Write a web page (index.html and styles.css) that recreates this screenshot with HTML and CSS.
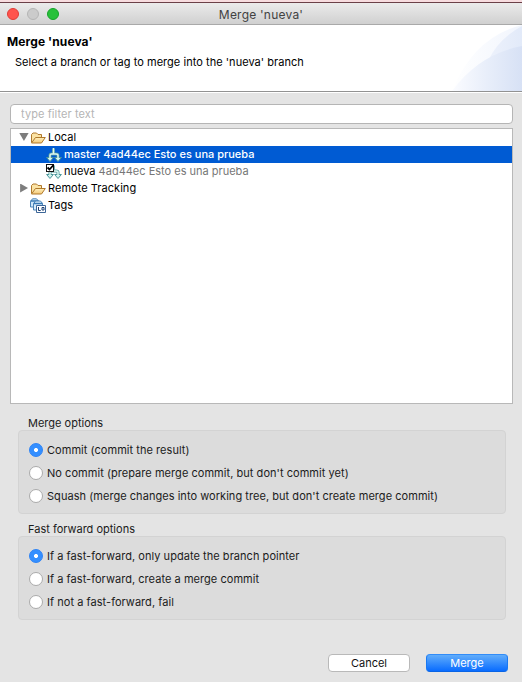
FILE: index.html
```html
<!DOCTYPE html>
<html lang="en">
<head>
<meta charset="utf-8">
<title>Merge 'nueva'</title>
<link rel="stylesheet" href="styles.css">
</head>
<body>
<svg width="0" height="0" class="defs" aria-hidden="true">
  <defs>
    <linearGradient id="fold" x1="0" y1="0" x2="0" y2="1"><stop offset="0" stop-color="#fff0bd"/><stop offset="1" stop-color="#f3c877"/></linearGradient>
    <linearGradient id="swoosh" x1="0" x2="1"><stop offset="0" stop-color="#fbfcff"/><stop offset=".5" stop-color="#e8eefa"/><stop offset="1" stop-color="#d7e1f5"/></linearGradient>
    <linearGradient id="swoosh2" x1="0" x2="1"><stop offset="0" stop-color="#ffffff"/><stop offset="1" stop-color="#f1f5fd"/></linearGradient>
    <linearGradient id="swoosh3" x1="0" x2="1"><stop offset="0" stop-color="#eff3fc"/><stop offset="1" stop-color="#e2eaf9"/></linearGradient>
    <symbol id="folder" viewBox="0 0 16 16">
      <path d="M1.500 12.500V4.500L3 3h3.500L8 4.500h3.500V8" fill="#fbe3a4" stroke="#b0792c"/>
      <path d="M1.500 13 5.500 7.500h9.800L11.500 13z" fill="url(#fold)" stroke="#b0792c"/>
    </symbol>
    <symbol id="branch" viewBox="0 0 16 16">
      <path d="M7.500 1.500v5.500M4 11.500V8.500q0-1.500 1.500-1.500h4.500q2 0 2 1.500v3" fill="none" stroke="#4f989c" stroke-width="3"/>
      <path d="M.6 10.500h6.800L4 14.500zM8.600 10.500h6.800L12 14.500z" fill="#c9f0ee" stroke="#4f989c"/>
      <path d="M7.500 1v6M4 12V8.500q0-1.500 1.500-1.500h4.500q2 0 2 1.500V12" fill="none" stroke="#dcf7f1" stroke-width="1.500"/>
    </symbol>
  </defs>
</svg>
<main class="window">
  <div class="titlebar">
    <i class="light red"></i><i class="light gray"></i><i class="light green"></i>
    <span class="title">Merge 'nueva'</span>
  </div>
  <header class="banner">
    <svg class="swoosh" width="70" height="66" viewBox="0 0 70 66">
      <path d="M0 66Q22 12 70 0V66z" fill="url(#swoosh2)"/>
      <path d="M36 36Q46 14 70 1V66H30z" fill="url(#swoosh3)"/>
      <path d="M0 66Q27 29 70 21V66z" fill="url(#swoosh)"/>
    </svg>
    <h1>Merge 'nueva'</h1>
    <p>Select a branch or tag to merge into the 'nueva' branch</p>
  </header>
  <section class="content">
    <input class="filter" type="text" placeholder="type filter text" aria-label="Filter">
    <div class="tree">
      <div class="row"><i class="arrow open"></i><svg class="icon"><use href="#folder"/></svg><span>Local</span></div>
      <div class="row child selected"><svg class="icon"><use href="#branch"/></svg><span>master 4ad44ec Esto es una prueba</span></div>
      <div class="row child"><svg class="icon" viewBox="0 0 16 16"><use href="#branch"/><path d="M0 0h8v8H0z" fill="#111"/><path d="M1 1h6v6H1z" fill="#fff"/><path d="m1.500 3.500 2 2L7.500 1" fill="none" stroke="#000" stroke-width="1.800"/></svg><span>nueva <em>4ad44ec Esto es una prueba</em></span></div>
      <div class="row"><i class="arrow closed"></i><svg class="icon"><use href="#folder"/></svg><span class="wide">Remote Tracking</span></div>
      <div class="row"><i class="arrow"></i><svg class="icon tags" viewBox="0 0 16 16">
        <path d="M.5 3.500 2.500.8h4L8.500 3V9h-8z" fill="#cfe7f8" stroke="#4a83b8"/>
        <path d="M.5 3h8" stroke="#397ab5" stroke-width="1.500"/>
        <path d="M3.500 6 5.500 3h5L12.500 5.500V12h-9z" fill="#d9edfa" stroke="#4a83b8"/>
        <path d="M3.500 5.500h9" stroke="#397ab5" stroke-width="1.500"/>
        <path d="M6.500 7.500h9v7h-9z" fill="#fff" stroke="#3d6698"/>
        <path d="M8.500 9v3.500h2.200M12 9.500h2v2.500h-2z" fill="none" stroke="#1c3f70"/></svg><span>Tags</span></div>
    </div>
    <h2 class="legend">Merge options</h2>
    <div class="group">
      <label><input type="radio" name="merge" checked><span>Commit (commit the result)</span></label>
      <label><input type="radio" name="merge"><span>No commit (prepare merge commit, but don't commit yet)</span></label>
      <label><input type="radio" name="merge"><span>Squash (merge changes into working tree, but don't create merge commit)</span></label>
    </div>
    <h2 class="legend">Fast forward options</h2>
    <div class="group">
      <label><input type="radio" name="ff" checked><span>If a fast-forward, only update the branch pointer</span></label>
      <label><input type="radio" name="ff"><span>If a fast-forward, create a merge commit</span></label>
      <label><input type="radio" name="ff"><span>If not a fast-forward, fail</span></label>
    </div>
  </section>
  <footer class="buttons"><button>Cancel</button><button class="primary">Merge</button></footer>
</main>
</body>
</html>
```
FILE: styles.css
```css
* { box-sizing: border-box; }
body { margin: 0; background: #e4e4e4; color: #1b1b1b; font: 11px/17px Inter, "Liberation Sans", sans-serif; }
.defs { position: absolute; }
.window { width: 522px; height: 682px; display: flex; flex-direction: column; overflow: hidden; background: #e4e4e4; border-top: 2px solid #f7dcdf; }
.titlebar { height: 23px; flex: none; display: flex; align-items: center; gap: 8px; padding: 0 7px; border-top: 1px solid #6b4048; border-bottom: 1px solid #a9a9a9; background: linear-gradient(#ebebeb, #d0d0d0); }
.light { width: 12px; height: 12px; border-radius: 50%; border: 1px solid; }
.red { background: #ff544d; border-color: #df3d37; }
.gray { background: #cbcbcb; border-color: #b5b5b5; }
.green { background: #28c13a; border-color: #16a329; }
.title { flex: 1; margin-right: 60px; padding-top: 1px; text-align: center; font-size: 12px; letter-spacing: .22px; color: #424242; }
.banner { height: 68px; flex: none; background: #fff; border-bottom: 1px solid #fff; box-shadow: inset 0 -1px #929292; position: relative; color: #000; padding: 8px 7px; }
.swoosh { position: absolute; right: 0; top: 0; }
h1 { margin: 0; font-size: 12px; line-height: 17px; font-weight: 700; letter-spacing: .1px; }
p { margin: 4px 0 0 8px; line-height: 17px; letter-spacing: .04px; }
.content { padding: 11px 9px 0 10px; display: flex; flex-direction: column; }
.filter { height: 20px; border: 1px solid #b5b5b5; border-radius: 4px; background: #fff; padding: 0 10px; font: inherit; letter-spacing: .08px; outline: 0; }
.filter::placeholder { color: #b5b5b5; opacity: 1; }
.tree { margin-top: 4px; height: 276px; border: 1px solid #b8b8b8; background: #fff; color: #000; }
.row { height: 17px; display: flex; align-items: center; padding-left: 8px; white-space: nowrap; }
.child { padding-left: 35px; }
.selected { background: #005bd3; color: #fff; font-weight: 500; }
.wide { letter-spacing: .04px; }
.icon { width: 16px; height: 16px; flex: none; margin-right: 2px; overflow: visible; }
.arrow { width: 11px; height: 10px; flex: none; }
.open { background: #7d7d7d; clip-path: polygon(0 0, 90% 0, 45% 85%); }
.closed { background: #7d7d7d; clip-path: polygon(10% 0, 82% 45%, 10% 90%); }
em { font-style: normal; color: #777; }
.legend { margin: 11px 0 0 18px; height: 15px; font: inherit; line-height: 17px; }
.group { margin: 0 7px 0 8px; height: 84px; padding: 8px 10px; border: 1px solid #d3d3d3; border-radius: 4px; background: #dcdcdc; }
.group + .legend { margin-top: 7px; }
label { display: flex; align-items: center; height: 23px; white-space: nowrap; letter-spacing: .045px; }
input[type=radio] { appearance: none; width: 14px; height: 14px; flex: none; margin: 0 4px 1px 0; border: 1px solid #aaa; border-radius: 50%; background: #fff; }
input[type=radio]:checked { border-color: #2b82f6; background: radial-gradient(circle, #fff 0 1.700px, #348fff 2.300px); }
.buttons { margin-top: 34px; display: flex; gap: 16px; padding-left: 328px; }
button { width: 82px; height: 18px; padding: 0; font: inherit; line-height: 16px; color: #111; border: 1px solid #b9b9b9; border-radius: 4px; background: #fff; }
.primary { color: #fff; border-color: #318cf8 #1979f3 #0964e5; background: linear-gradient(#61adfb, #096cff); }
```
